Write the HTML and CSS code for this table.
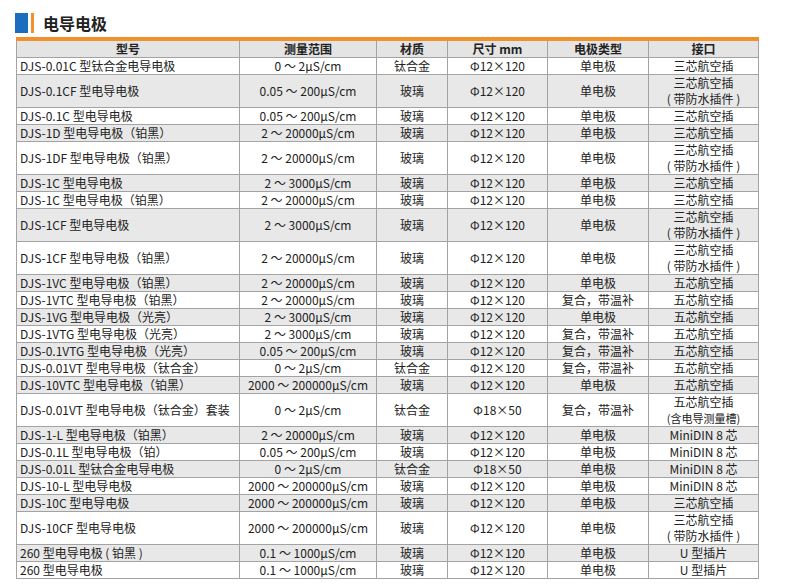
FILE: index.html
```html
<!DOCTYPE html>
<html lang="zh-CN">
<head>
<meta charset="utf-8">
<title>电导电极</title>
<link rel="stylesheet" href="styles.css">
</head>
<body>
<div class="page">
  <div class="title-row">
    <span class="mark-blue"></span>
    <span class="mark-orange"></span>
    <h1 class="title">电导电极</h1>
  </div>
  <table class="spec">
    <colgroup>
      <col class="c1"><col class="c2"><col class="c3"><col class="c4"><col class="c5"><col class="c6">
    </colgroup>
    <thead>
      <tr class="head"><th>型号</th><th>测量范围</th><th>材质</th><th>尺寸 mm</th><th>电极类型</th><th>接口</th></tr>
    </thead>
    <tbody>
      <tr class="s"><td class="name">DJS-0.01C 型钛合金电导电极</td><td>0 ～ 2μS/cm</td><td>钛合金</td><td>Φ12×120</td><td>单电极</td><td>三芯航空插</td></tr>
      <tr class="d alt"><td class="name">DJS-0.1CF 型电导电极</td><td>0.05 ～ 200μS/cm</td><td>玻璃</td><td>Φ12×120</td><td>单电极</td><td><span class="ln">三芯航空插</span><span class="ln">( 带防水插件 )</span></td></tr>
      <tr class="s"><td class="name">DJS-0.1C 型电导电极</td><td>0.05 ～ 200μS/cm</td><td>玻璃</td><td>Φ12×120</td><td>单电极</td><td>三芯航空插</td></tr>
      <tr class="s alt"><td class="name">DJS-1D 型电导电极（铂黑）</td><td>2 ～ 20000μS/cm</td><td>玻璃</td><td>Φ12×120</td><td>单电极</td><td>三芯航空插</td></tr>
      <tr class="d"><td class="name">DJS-1DF 型电导电极（铂黑）</td><td>2 ～ 20000μS/cm</td><td>玻璃</td><td>Φ12×120</td><td>单电极</td><td><span class="ln">三芯航空插</span><span class="ln">( 带防水插件 )</span></td></tr>
      <tr class="s alt"><td class="name">DJS-1C 型电导电极</td><td>2 ～ 3000μS/cm</td><td>玻璃</td><td>Φ12×120</td><td>单电极</td><td>三芯航空插</td></tr>
      <tr class="s"><td class="name">DJS-1C 型电导电极（铂黑）</td><td>2 ～ 20000μS/cm</td><td>玻璃</td><td>Φ12×120</td><td>单电极</td><td>三芯航空插</td></tr>
      <tr class="d alt"><td class="name">DJS-1CF 型电导电极</td><td>2 ～ 3000μS/cm</td><td>玻璃</td><td>Φ12×120</td><td>单电极</td><td><span class="ln">三芯航空插</span><span class="ln">( 带防水插件 )</span></td></tr>
      <tr class="d"><td class="name">DJS-1CF 型电导电极（铂黑）</td><td>2 ～ 20000μS/cm</td><td>玻璃</td><td>Φ12×120</td><td>单电极</td><td><span class="ln">三芯航空插</span><span class="ln">( 带防水插件 )</span></td></tr>
      <tr class="s alt"><td class="name">DJS-1VC 型电导电极（铂黑）</td><td>2 ～ 20000μS/cm</td><td>玻璃</td><td>Φ12×120</td><td>单电极</td><td>五芯航空插</td></tr>
      <tr class="s"><td class="name">DJS-1VTC 型电导电极（铂黑）</td><td>2 ～ 20000μS/cm</td><td>玻璃</td><td>Φ12×120</td><td>复合，带温补</td><td>五芯航空插</td></tr>
      <tr class="s alt"><td class="name">DJS-1VG 型电导电极（光亮）</td><td>2 ～ 3000μS/cm</td><td>玻璃</td><td>Φ12×120</td><td>单电极</td><td>五芯航空插</td></tr>
      <tr class="s"><td class="name">DJS-1VTG 型电导电极（光亮）</td><td>2 ～ 3000μS/cm</td><td>玻璃</td><td>Φ12×120</td><td>复合，带温补</td><td>五芯航空插</td></tr>
      <tr class="s alt"><td class="name">DJS-0.1VTG 型电导电极（光亮）</td><td>0.05 ～ 200μS/cm</td><td>玻璃</td><td>Φ12×120</td><td>复合，带温补</td><td>五芯航空插</td></tr>
      <tr class="s"><td class="name">DJS-0.01VT 型电导电极（钛合金）</td><td>0 ～ 2μS/cm</td><td>钛合金</td><td>Φ12×120</td><td>复合，带温补</td><td>五芯航空插</td></tr>
      <tr class="s alt"><td class="name">DJS-10VTC 型电导电极（铂黑）</td><td>2000 ～ 200000μS/cm</td><td>玻璃</td><td>Φ12×120</td><td>单电极</td><td>五芯航空插</td></tr>
      <tr class="d"><td class="name">DJS-0.01VT 型电导电极（钛合金）套装</td><td>0 ～ 2μS/cm</td><td>钛合金</td><td>Φ18×50</td><td>复合，带温补</td><td><span class="ln">五芯航空插</span><span class="ln narrow">(含电导测量槽)</span></td></tr>
      <tr class="s alt"><td class="name">DJS-1-L 型电导电极（铂黑）</td><td>2 ～ 20000μS/cm</td><td>玻璃</td><td>Φ12×120</td><td>单电极</td><td>MiniDIN 8 芯</td></tr>
      <tr class="s"><td class="name">DJS-0.1L 型电导电极（铂）</td><td>0.05 ～ 200μS/cm</td><td>玻璃</td><td>Φ12×120</td><td>单电极</td><td>MiniDIN 8 芯</td></tr>
      <tr class="s alt"><td class="name">DJS-0.01L 型钛合金电导电极</td><td>0 ～ 2μS/cm</td><td>钛合金</td><td>Φ18×50</td><td>单电极</td><td>MiniDIN 8 芯</td></tr>
      <tr class="s"><td class="name">DJS-10-L 型电导电极</td><td>2000 ～ 200000μS/cm</td><td>玻璃</td><td>Φ12×120</td><td>单电极</td><td>MiniDIN 8 芯</td></tr>
      <tr class="s alt"><td class="name">DJS-10C 型电导电极</td><td>2000 ～ 200000μS/cm</td><td>玻璃</td><td>Φ12×120</td><td>单电极</td><td>三芯航空插</td></tr>
      <tr class="d"><td class="name">DJS-10CF 型电导电极</td><td>2000 ～ 200000μS/cm</td><td>玻璃</td><td>Φ12×120</td><td>单电极</td><td><span class="ln">三芯航空插</span><span class="ln">( 带防水插件 )</span></td></tr>
      <tr class="s alt"><td class="name">260 型电导电极 ( 铂黑 )</td><td>0.1 ～ 1000μS/cm</td><td>玻璃</td><td>Φ12×120</td><td>单电极</td><td>U 型插片</td></tr>
      <tr class="s"><td class="name">260 型电导电极</td><td>0.1 ～ 1000μS/cm</td><td>玻璃</td><td>Φ12×120</td><td>单电极</td><td>U 型插片</td></tr>
    </tbody>
  </table>
</div>
</body>
</html>
```

FILE: styles.css
```css
html, body {
  margin: 0;
  padding: 0;
  background: #ffffff;
}

body {
  font-family: "Noto Sans CJK SC", "Noto Sans", sans-serif;
  color: #222222;
}

.page {
  padding: 13px 16px 0 15px;
}

.title-row {
  display: flex;
  align-items: center;
  height: 20px;
  margin-bottom: 4px;
}

.mark-blue {
  width: 13px;
  height: 20px;
  background: #1a6dbf;
}

.mark-orange {
  width: 3px;
  height: 20px;
  margin-left: 3px;
  background: #f0912c;
}

.title {
  margin: 0 0 0 9px;
  font-size: 16px;
  font-weight: 700;
  line-height: 20px;
  color: #222222;
}

.spec {
  margin-left: 1px;
  width: 742px;
  table-layout: fixed;
  border-collapse: collapse;
  border-top: 4px solid #f0912c;
  font-size: 12px;
}

.c1 { width: 223px; }
.c2 { width: 137px; }
.c3 { width: 71px; }
.c4 { width: 100px; }
.c5 { width: 101px; }
.c6 { width: 110px; }

.spec th,
.spec td {
  border: 1px solid #a3a3a3;
  padding: 0;
  line-height: 15px;
  text-align: center;
  vertical-align: middle;
  white-space: nowrap;
}

.spec th {
  font-weight: 700;
  background: #e4e4e4;
}

.spec tr.head {
  height: 18px;
}

.spec tr.s {
  height: 17px;
}

.spec tr.d {
  height: 33px;
}

.spec tr.alt td {
  background: #e8e8e8;
}

.spec td.name {
  text-align: left;
  padding-left: 3px;
}

.ln {
  display: block;
  line-height: 16px;
}

.narrow {
  font-size: 11px;
}
```
